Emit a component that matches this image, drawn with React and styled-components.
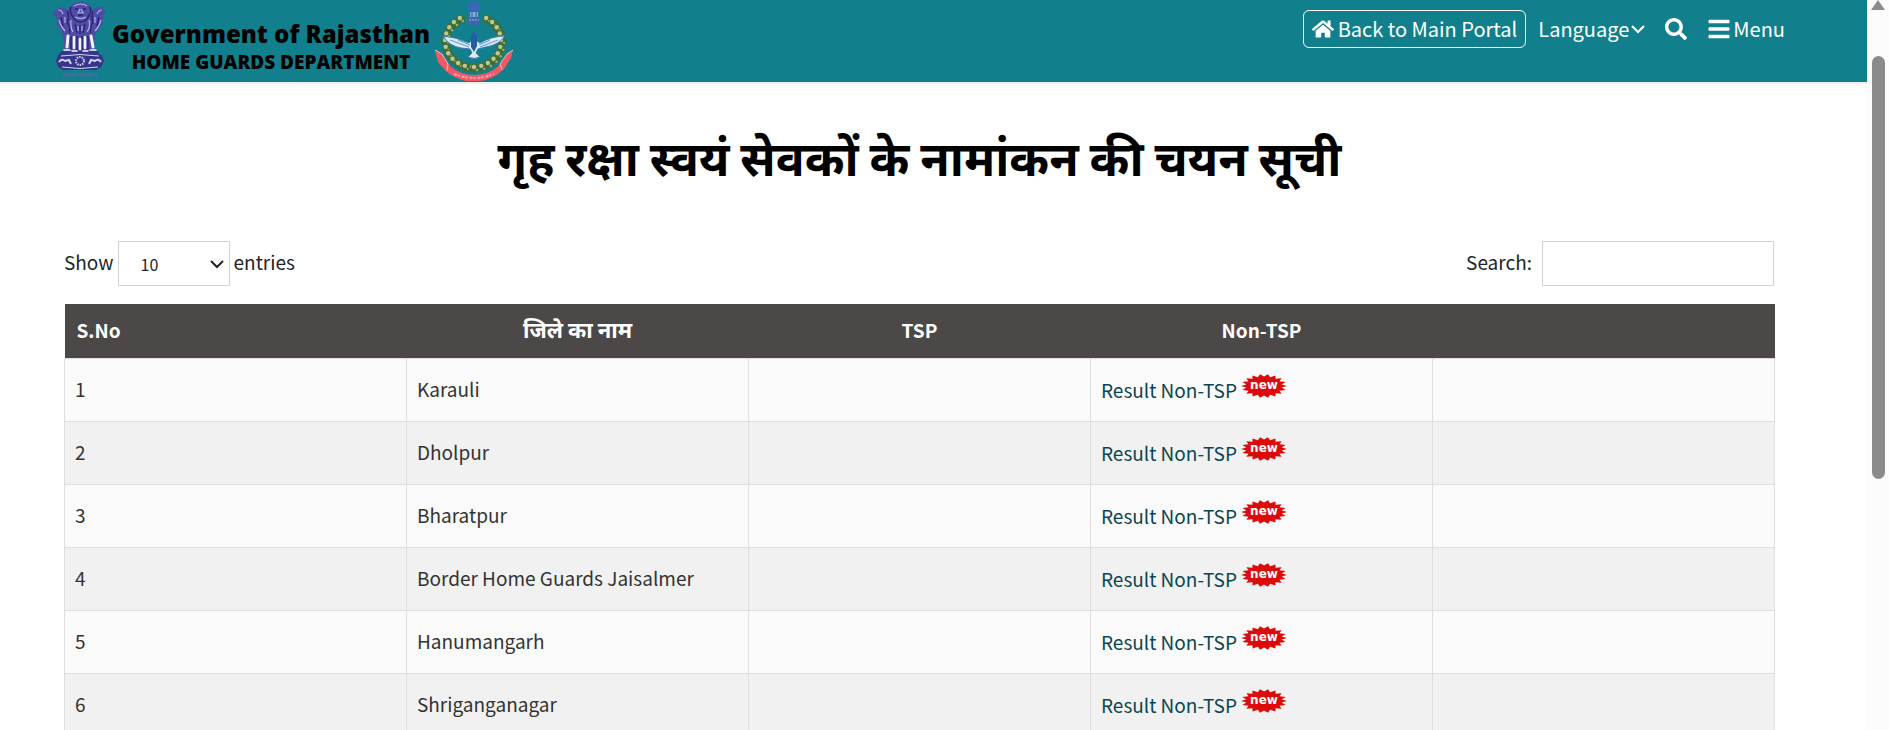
import React, { useState } from "react";
import styled, { createGlobalStyle } from "styled-components";
import { FaHome, FaSearch, FaBars } from "react-icons/fa";

const districts = [
  { id: 1, name: "Karauli" },
  { id: 2, name: "Dholpur" },
  { id: 3, name: "Bharatpur" },
  { id: 4, name: "Border Home Guards Jaisalmer" },
  { id: 5, name: "Hanumangarh" },
  { id: 6, name: "Shriganganagar" },
];

const burst = (cx, cy, rx, ry, points) =>
  Array.from({ length: points * 2 }, (_, i) => {
    const k = i % 2 ? 0.78 : 1;
    const a = (Math.PI * i) / points;
    return `${(cx + rx * k * Math.cos(a)).toFixed(1)},${(
      cy +
      ry * k * Math.sin(a)
    ).toFixed(1)}`;
  }).join(" ");

const LionCapital = () => (
  <svg width="56" height="78" viewBox="0 0 56 78" aria-hidden="true">
    <path
      d="M19 6Q21 2 29 2Q36 2 38 6L41 10Q46 5 50 8L54 12L51 15L51 22Q49 28 45 30L43 36L42 51H13L11 36L9 30Q5 28 5 22L4 16L1 13L6 8Q11 6 15 10Z"
      fill="#4f4ba6"
    />
    <path
      d="M10 51H46L48 55H50L52 61L49 67L44 70H11L6 67L4 61L6 55Z"
      fill="#37358a"
    />
    {/* manes */}
    <g fill="none" stroke="#28256f" strokeWidth="1.4">
      <path d="M19 7Q17 12 21 17Q24 22 28 22Q34 22 36 17Q40 12 38 7" />
      <path d="M15 11Q18 17 15 22Q19 27 17 33M41 11Q39 17 41 22Q37 27 39 33" />
      <path d="M23 24L25 33M28 25V34M33 24L31 33M9 17L11 26M47 17L45 26" />
      <path d="M23 9H26M31 9H34M26 15H31M19 36V50M25 36V50M30 36V50M36 36V50" />
    </g>
    <g fill="none" stroke="#b5b2e6" strokeWidth="1.2">
      <path d="M22 6Q29 2 35 6M28 9L26 13H31L29 9M23 17Q29 20 34 17" />
      <path d="M6 10Q10 10 11 14M50 10Q47 10 45 14M7 20Q9 27 13 31M49 20Q47 27 43 31" />
      <path d="M19 20Q18 27 21 32M37 20Q39 27 35 32M13 17L13 23M43 17V23M26 26V31M30 26V31" />
    </g>
    <g fill="none" stroke="#f1f1fb" strokeLinecap="round">
      <path d="M16 36L15 47M39 36L41 47" strokeWidth="3" />
      <path d="M22 37V48M28 39V49M33 37V48" strokeWidth="2.6" />
      <path d="M12 50H18M20 51H25M31 51H36M38 50H44" strokeWidth="1.4" />
    </g>
    <g fill="none" stroke="#d5d5f2">
      <path d="M9 56Q28 53 47 56M10 67Q28 70 46 67" strokeWidth="1" />
      <path
        d="M7 62Q10 58 13 61L17 60L19 64M49 62Q46 58 43 61L39 60L37 64"
        strokeWidth="2"
      />
      <circle cx="28" cy="61" r="4" strokeWidth="2" strokeDasharray="1.5 1" />
    </g>
    <path
      d="M11 75H46"
      stroke="#4c68a4"
      strokeWidth="3"
      strokeDasharray="4 1 2 1 6 2"
    />
  </svg>
);

const leaves = [...Array(11)].flatMap((_, i) => {
  const a = ((118 + i * 15) * Math.PI) / 180;
  const x = 28 * Math.cos(a);
  const y = 26 * Math.sin(a);
  return [
    [40 + x, 42 - y],
    [40 - x, 42 - y],
  ];
});

const GuardsCrest = () => (
  <svg width="80" height="82" viewBox="0 0 80 82" aria-hidden="true">
    <path d="M33 6Q34 1 40 1Q46 1 47 6L45 12H35Z" fill="#3569b4" />
    <path d="M36 12H44V17H36Z" fill="#86a9d6" />
    <path d="M38 12V17M42 12V17" stroke="#2c5a9e" />
    <path d="M33 17H47L45 25H35Z" fill="#3a68ae" />
    <path d="M35 20H45" stroke="#8fb2da" strokeDasharray="2 1" />
    {leaves.map(([x, y], i) => (
      <g key={i}>
        <circle cx={x} cy={y} r="4.6" fill="#3f6e3a" />
        <circle cx={x - 1} cy={y - 1} r="2.2" fill="#c3c98c" />
        <circle cx={x + 2} cy={y + 2} r="1.2" fill="#9fb36e" />
      </g>
    ))}
    <path
      d="M9 36Q22 37 35 43L38 40V35L40 32L43 35V41L46 43Q58 36 71 36Q65 45 52 47L44 49L42 53L46 57Q40 60 34 57L38 53L36 49L27 48Q15 46 9 36Z"
      fill="#dceaf4"
      stroke="#3878b4"
      strokeWidth="1"
    />
    <path d="M37 35L40 31L43 35V46L40 52L37 47Z" fill="#255da4" />
    <path
      d="M16 40L35 47M64 40L46 47M24 40L36 45M56 40L45 45"
      stroke="#5f98c9"
      fill="none"
    />
    <path
      d="M1 50L8 54Q15 69 28 73Q40 77 53 73Q66 68 73 54L79 50L77 58L70 69Q60 79 46 81H32Q18 78 9 68L4 62Z"
      fill="#ed5965"
    />
    <path
      d="M1 50L8 54L14 64M79 50L73 54L66 64M14 64L13 71M66 64L68 70"
      fill="none"
      stroke="#f7b7bb"
    />
    <path
      d="M20 74Q40 82 60 74"
      fill="none"
      stroke="#ffa4aa"
      strokeWidth="2"
      strokeDasharray="3 1 2 2"
    />
  </svg>
);

const NewBadge = () => (
  <svg width="46" height="24" viewBox="0 0 46 24" role="img" aria-label="new">
    <polygon points={burst(23, 12, 23, 12, 18)} fill="#dc0a0a" />
    <BadgeText x="23" y="15" textAnchor="middle">
      new
    </BadgeText>
  </svg>
);

const Chevron = () => (
  <svg width="14" height="10" viewBox="0 0 14 10" aria-hidden="true">
    <path d="M1 2L7 8L13 2" fill="none" stroke="currentColor" strokeWidth="2" />
  </svg>
);

const App = () => {
  const [size, setSize] = useState("10");
  const [search, setSearch] = useState("");
  return (
    <>
      <GlobalStyle />
      <Screen>
        <Page>
          <Header>
            <Brand>
              <LionCapital />
              <BrandText>
                <BrandTitle>Government of Rajasthan</BrandTitle>
                <BrandSubtitle>HOME GUARDS DEPARTMENT</BrandSubtitle>
              </BrandText>
              <GuardsCrest />
            </Brand>
            <Nav>
              <NavGroup>
                <PortalLink href="#">
                  <FaHome size={22} />
                  Back to Main Portal
                </PortalLink>
                <NavButton type="button">
                  Language
                  <Chevron />
                </NavButton>
              </NavGroup>
              <NavButton type="button" aria-label="Search the site">
                <FaSearch size={22} />
              </NavButton>
              <NavButton type="button">
                <FaBars size={24} />
                Menu
              </NavButton>
            </Nav>
          </Header>
          <Main>
            <Title>गृह रक्षा स्वयं सेवकों के नामांकन की चयन सूची</Title>
            {/* table controls */}
            <Controls>
              <Label>
                Show
                <SelectBox>
                  <Select
                    value={size}
                    onChange={(e) => setSize(e.target.value)}
                  >
                    <option>10</option>
                    <option>25</option>
                    <option>50</option>
                    <option>100</option>
                  </Select>
                  <Chevron />
                </SelectBox>
                entries
              </Label>
              <Label $gap={10}>
                Search:
                <SearchInput
                  type="search"
                  value={search}
                  onChange={(e) => setSearch(e.target.value)}
                />
              </Label>
            </Controls>
            <Table>
              <thead>
                <tr>
                  <Th $align="left">S.No</Th>
                  <HindiTh>जिले का नाम</HindiTh>
                  <Th>TSP</Th>
                  <Th>Non-TSP</Th>
                  <Th />
                </tr>
              </thead>
              <tbody>
                {districts
                  .filter((d) =>
                    d.name.toLowerCase().includes(search.toLowerCase())
                  )
                  .map((d) => (
                    <Row key={d.id}>
                      <Td>{d.id}</Td>
                      <Td>{d.name}</Td>
                      <Td />
                      <Td>
                        <ResultLink href="#">
                          Result Non-TSP
                          <NewBadge />
                        </ResultLink>
                      </Td>
                      <Td />
                    </Row>
                  ))}
              </tbody>
            </Table>
          </Main>
        </Page>
        <ScrollTrack aria-hidden="true">
          <ScrollArrow />
          <ScrollThumb />
        </ScrollTrack>
      </Screen>
    </>
  );
};

export default App;

const GlobalStyle = createGlobalStyle`
  * {
    box-sizing: border-box;
  }
  body {
    margin: 0;
    overflow: hidden;
    background: #fff;
    color: #212529;
    font-family: "Noto Sans CJK SC", "Noto Sans", sans-serif;
    font-size: 19px;
    line-height: 28px;
  }
  a {
    text-decoration: none;
  }
`;

const Screen = styled.div`
  display: flex;
  height: 100vh;
  overflow: hidden;
`;

const Page = styled.div`
  flex: 1;
  min-width: 0;
`;

const Header = styled.header`
  display: flex;
  justify-content: space-between;
  align-items: flex-start;
  height: 82px;
  padding: 0 82px 0 52px;
  background: #12808c;
  box-shadow: 0 2px 2px rgba(0, 0, 0, 0.08);
  color: #fff;
`;

const Brand = styled.div`
  display: flex;
  gap: 4px;
  color: #000;
`;

const BrandText = styled.div`
  display: flex;
  flex-direction: column;
  align-items: center;
  padding-top: 18px;
  font-family: "Open Sans", sans-serif;
  font-weight: 800;
`;

const BrandTitle = styled.div`
  font-size: 24px;
  line-height: 32px;
`;

const BrandSubtitle = styled.div`
  font-size: 19px;
  line-height: 24px;
`;

const Nav = styled.nav`
  display: flex;
  align-items: center;
  gap: 20px;
  padding-top: 10px;
  font-size: 20px;
`;

const NavGroup = styled.div`
  display: flex;
  align-items: center;
  gap: 12px;
`;

const PortalLink = styled.a`
  display: flex;
  align-items: center;
  gap: 4px;
  height: 38px;
  padding: 0 8px;
  border: 1px solid #fff;
  border-radius: 6px;
  color: #fff;
`;

const NavButton = styled.button`
  display: flex;
  align-items: center;
  gap: 2px;
  padding: 0;
  border: 0;
  background: none;
  color: inherit;
  font: inherit;
`;

const Main = styled.main`
  padding: 34px 92px 0 64px;
`;

const Title = styled.h1`
  margin: 0;
  color: #000;
  font-size: 48px;
  font-weight: 700;
  line-height: 78px;
  text-align: center;
`;

const Controls = styled.div`
  display: flex;
  justify-content: space-between;
  padding: 47px 1px 18px 0;
`;

const Label = styled.label`
  display: flex;
  align-items: flex-start;
  gap: ${(props) => props.$gap || 4}px;
  line-height: 41px;
`;

const SelectBox = styled.span`
  position: relative;
  svg {
    position: absolute;
    right: 6px;
    top: 18px;
    pointer-events: none;
  }
`;

const Select = styled.select`
  display: block;
  appearance: none;
  width: 112px;
  height: 45px;
  padding: 0 22px;
  border: 1px solid #d3d3d3;
  border-radius: 0;
  background: #fff;
  color: #212529;
  font-family: inherit;
  font-size: 16px;
`;

const SearchInput = styled.input`
  width: 232px;
  height: 45px;
  padding: 0 12px;
  border: 1px solid #d3d3d3;
  background: #fff;
  font: inherit;
`;

const Table = styled.table`
  width: 100%;
  table-layout: fixed;
  border-collapse: collapse;
`;

const Th = styled.th`
  height: 54px;
  padding: 0 12px 2px;
  background: #4c4848;
  color: #fff;
  font-weight: 700;
  text-align: ${(props) => props.$align || "center"};
`;

const HindiTh = styled(Th)`
  padding-bottom: 6px;
  font-size: 22px;
`;

const Row = styled.tr`
  background: #fafafa;
  &:nth-child(even) {
    background: #f1f1f1;
  }
`;

const Td = styled.td`
  height: 63px;
  padding: 0 10px 2px;
  border: 1px solid #dedede;
  color: #333;
`;

const ResultLink = styled.a`
  display: flex;
  align-items: flex-start;
  gap: 4px;
  padding-top: 2px;
  color: #0b4650;
  line-height: 32px;
`;

const BadgeText = styled.text`
  fill: #fff;
  font-family: "DejaVu Sans", sans-serif;
  font-size: 12px;
  font-weight: 700;
`;

const ScrollTrack = styled.div`
  display: flex;
  flex-direction: column;
  align-items: center;
  gap: 46px;
  width: 22px;
  background: #fcfcfc;
`;

const ScrollArrow = styled.div`
  border: 7px solid transparent;
  border-top-width: 0;
  border-bottom: 10px solid #8b8b8b;
`;

const ScrollThumb = styled.div`
  width: 13px;
  height: 58%;
  border-radius: 7px;
  background: #8b8b8b;
`;
